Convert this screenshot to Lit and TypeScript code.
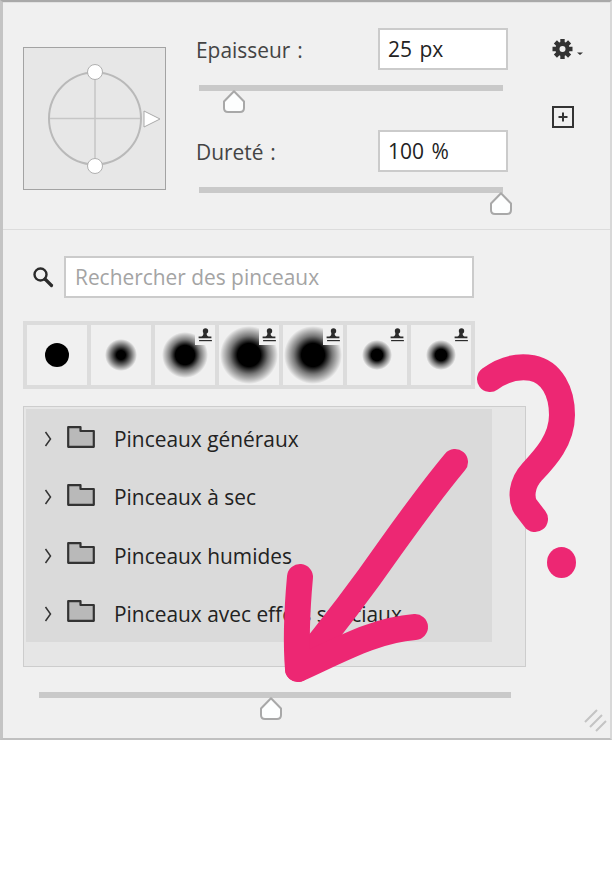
import { LitElement, html, css, svg } from 'lit';
import { customElement, property } from 'lit/decorators.js';

const BRUSHES = [
  { r: 12, soft: 100, stamp: false },
  { r: 16, soft: 28, stamp: false },
  { r: 23, soft: 42, stamp: true },
  { r: 29, soft: 40, stamp: true },
  { r: 29, soft: 40, stamp: true },
  { r: 15, soft: 38, stamp: true },
  { r: 15, soft: 38, stamp: true },
];

const FOLDERS = [
  'Pinceaux généraux',
  'Pinceaux à sec',
  'Pinceaux humides',
  'Pinceaux avec effets spéciaux',
];

@customElement('brush-slider')
export class BrushSlider extends LitElement {
  @property({ type: Number }) value = 0;

  static styles = css`
    :host {
      display: block;
    }
    .track {
      position: relative;
      height: 6px;
      background: #c9c9c9;
    }
    svg {
      position: absolute;
      top: 5px;
      width: 24px;
      height: 24px;
      margin-left: -12px;
    }
  `;

  render() {
    return html`
      <div class="track">
        <svg style="left:${this.value}%" viewBox="0 0 24 24">
          <path
            d="M12 1.2 L22 11.5 V18 Q22 22 18 22 H6 Q2 22 2 18 V11.5 Z"
            fill="#fdfefe"
            stroke="#a8a8a8"
            stroke-width="2"
            stroke-linejoin="round"
          />
        </svg>
      </div>
    `;
  }
}

@customElement('app-root')
export class AppRoot extends LitElement {
  static styles = css`
    :host {
      display: block;
      width: 612px;
      font-family: 'Open Sans', sans-serif;
      color: #222;
    }
    .panel {
      position: relative;
      box-sizing: border-box;
      width: 612px;
      height: 740px;
      background: #f0f0f0;
      border-top: 2px solid #a9a9a9;
      border-left: 3px solid #c4c4c4;
      border-right: 2px solid #d8d8d8;
      border-bottom: 2px solid #c0c0c0;
    }
    .top {
      display: flex;
      box-sizing: border-box;
      height: 228px;
      padding: 25px 0 0 20px;
      border-top: 1px solid #e2e2e2;
      border-bottom: 1px solid #dcdcdc;
    }
    .preview {
      box-sizing: border-box;
      width: 143px;
      height: 143px;
      margin-top: 19px;
      margin-right: 30px;
      background: #e7e7e7;
      border: 1px solid #a3a3a3;
    }
    .preview svg {
      display: block;
    }
    .controls {
      width: 312px;
    }
    .field {
      display: flex;
      align-items: center;
      justify-content: space-between;
      height: 42px;
    }
    .field label {
      margin-top: 2px;
      font-size: 20.9px;
      word-spacing: 1.5px;
      color: #444;
    }
    .value {
      box-sizing: border-box;
      width: 130px;
      height: 42px;
      padding-left: 8px;
      background: #fff;
      border: 2px solid #cbcbcb;
      font-size: 21px;
      word-spacing: 2px;
      line-height: 38px;
    }
    .controls brush-slider {
      width: 304px;
      height: 45px;
      margin: 15px 0 0 3px;
    }
    .tools {
      display: flex;
      flex-direction: column;
      margin-left: 44px;
      padding-top: 10px;
    }
    .gear {
      display: block;
      margin-bottom: 46px;
    }
    .search {
      display: flex;
      align-items: center;
      margin: 26px 0 0 29px;
    }
    .search svg {
      margin-right: 10px;
    }
    .query {
      box-sizing: border-box;
      width: 410px;
      height: 42px;
      padding-left: 9px;
      background: #fff;
      border: 2px solid #cbcbcb;
      font-size: 20.9px;
      line-height: 38px;
      color: #a4a4a4;
    }
    .strip {
      display: flex;
      gap: 4px;
      width: max-content;
      margin: 23px 0 0 20px;
      padding: 4px;
      background: #dcdcdc;
    }
    .cell {
      position: relative;
      display: flex;
      align-items: center;
      justify-content: center;
      width: 60px;
      height: 60px;
      background: #f0f0f0;
    }
    .dot {
      border-radius: 50%;
    }
    .stamp {
      position: absolute;
      top: 0;
      right: 0;
      display: block;
      background: #f0f0f0;
    }
    .list {
      box-sizing: border-box;
      width: 503px;
      height: 261px;
      margin: 17px 0 0 20px;
      padding-top: 2px;
      background: #e6e6e6;
      border: 1px solid #cdcdcd;
    }
    .rows {
      width: 466px;
      margin-left: 2px;
    }
    .row {
      display: flex;
      align-items: center;
      box-sizing: border-box;
      height: 58.25px;
      padding-top: 2px;
      background: #dadada;
      font-size: 20.9px;
    }
    .row .chev {
      margin: 0 15px 0 18px;
    }
    .row .folder {
      margin: -5px 19px 0 0;
    }
    .size {
      width: 472px;
      margin: 25px 0 0 36px;
    }
    .grip {
      position: absolute;
      right: 3px;
      bottom: 6px;
    }
    .ink {
      position: absolute;
      left: -3px;
      top: -2px;
      pointer-events: none;
    }
  `;

  renderBrush(b: { r: number; soft: number; stamp: boolean }) {
    const size = b.r * 2;
    const bg =
      b.soft === 100
        ? '#000'
        : `radial-gradient(circle closest-side, #000 ${b.soft}%, rgba(0,0,0,0.5) 66%, rgba(0,0,0,0.16) 90%, rgba(0,0,0,0) 100%)`;
    return html`
      <div class="cell">
        <div class="dot" style="width:${size}px;height:${size}px;background:${bg}"></div>
        ${b.stamp
          ? html`<svg class="stamp" width="20" height="20" viewBox="0 0 20 20">
              <circle cx="10.5" cy="6" r="2.7" fill="#2b2b2b" />
              <path
                d="M9.4 8 h2.2 c0 2 .4 3 2 3.4 h2.8 v1.8 h-12.8 v-1.8 h2.8 c1.6-.4 2-1.4 2-3.4 Z"
                fill="#2b2b2b"
              />
              <path d="M4.1 15 h12.8 v1.2 h-12.8 Z" fill="#2b2b2b" />
            </svg>`
          : ''}
      </div>
    `;
  }

  renderPreview() {
    return html`
      <svg width="141" height="141" viewBox="0 0 141 141">
        <path d="M71 24 V118 M24 70.5 H118" stroke="#c6c6c6" stroke-width="1.5" fill="none" />
        <circle cx="71" cy="70.5" r="46" stroke="#b9b9b9" stroke-width="2" fill="none" />
        <circle cx="71" cy="24" r="7.5" fill="#fff" stroke="#b0b0b0" />
        <circle cx="71" cy="118" r="7.5" fill="#fff" stroke="#b0b0b0" />
        <path d="M120 63 L136 71 L120 79 Z" fill="#fff" stroke="#a9a9a9" />
      </svg>
    `;
  }

  renderInk() {
    return svg`
      <g fill="none" stroke="#ed2773" stroke-width="26" stroke-linecap="round" stroke-linejoin="round">
        <path d="M490 379 C505 368 520 366 532 368 C552 372 562 392 562 415 C562 440 545 458 532 472 C521 484 521 498 525 506 L535 519" />
        <path d="M455 462 C430 492 410 520 390 548 C365 584 330 630 298 669" />
        <path d="M300 577 C297 610 296 645 298 669 C340 650 375 630 415 627" />
      </g>
      <ellipse cx="561.5" cy="562.5" rx="14.5" ry="15.5" fill="#ed2773" />
    `;
  }

  render() {
    return html`
      <div class="panel">
        <div class="top">
          <div class="preview">${this.renderPreview()}</div>
          <div class="controls">
            <div class="field">
              <label>Epaisseur :</label>
              <div class="value">25 px</div>
            </div>
            <brush-slider value="11.4"></brush-slider>
            <div class="field">
              <label>Dureté :</label>
              <div class="value">100 %</div>
            </div>
            <brush-slider value="99.5"></brush-slider>
          </div>
          <div class="tools">
            <svg class="gear" width="34" height="22" viewBox="0 0 34 22">
              <g stroke="#333" stroke-width="4.4" fill="none">
                <path d="M10.5 1 V21 M.5 11 H20.5 M3.4 3.9 L17.6 18.1 M3.4 18.1 L17.6 3.9" />
              </g>
              <circle cx="10.5" cy="11" r="7.2" fill="#333" />
              <circle cx="10.5" cy="11" r="3" fill="#f0f0f0" />
              <path d="M25 14.5 h6 l-3 2.5 Z" fill="#333" />
            </svg>
            <svg width="22" height="22" viewBox="0 0 22 22">
              <rect x="1" y="1" width="20" height="20" fill="none" stroke="#333" stroke-width="2" />
              <path d="M11 6.5 V15.5 M6.5 11 H15.5" stroke="#333" stroke-width="2" fill="none" />
            </svg>
          </div>
        </div>
        <div class="search">
          <svg width="22" height="22" viewBox="0 0 22 22">
            <circle cx="8.5" cy="8.5" r="6" fill="none" stroke="#2b2b2b" stroke-width="2.4" />
            <path d="M13 13 L19.5 19.5" stroke="#2b2b2b" stroke-width="3.2" stroke-linecap="round" />
          </svg>
          <div class="query">Rechercher des pinceaux</div>
        </div>
        <div class="strip">${BRUSHES.map(b => this.renderBrush(b))}</div>
        <div class="list">
          <div class="rows">
            ${FOLDERS.map(
              name => html`
                <div class="row">
                  <svg class="chev" width="8" height="16" viewBox="0 0 8 16">
                    <path d="M1.5 1 L6.5 8 L1.5 15" fill="none" stroke="#333" stroke-width="1.5" />
                  </svg>
                  <svg class="folder" width="28" height="22" viewBox="0 0 28 22">
                    <path
                      d="M1.2 20.8 V1.2 H13.5 V5 H26.8 V20.8 Z"
                      fill="#b9b9b9"
                      stroke="#333"
                      stroke-width="2.2"
                      stroke-linejoin="round"
                    />
                  </svg>
                  <span>${name}</span>
                </div>
              `
            )}
          </div>
        </div>
        <brush-slider class="size" value="49.2"></brush-slider>
        <svg class="grip" width="24" height="24" viewBox="0 0 24 24">
          <path d="M2 14 L14 2 M7 19 L19 7 M13 23 L23 13" stroke="#c4c4c4" stroke-width="2" fill="none" />
        </svg>
        <svg class="ink" width="612" height="740" viewBox="0 0 612 740">${this.renderInk()}</svg>
      </div>
    `;
  }
}
